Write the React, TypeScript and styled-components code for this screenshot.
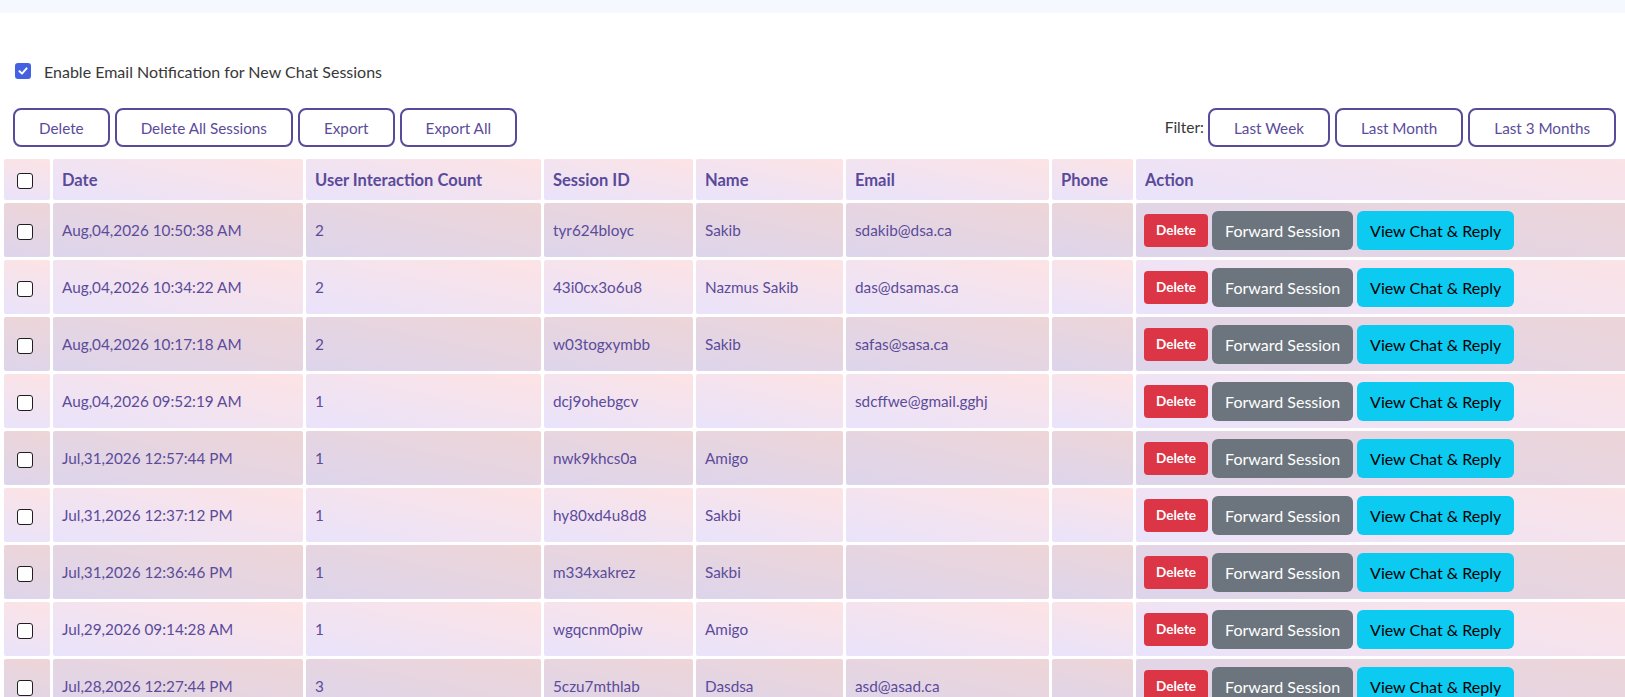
import { createGlobalStyle } from "styled-components"
import styled from "styled-components"

const GlobalStyle = createGlobalStyle`
    html, body {
        margin: 0;
        padding: 0;
        background: #fff;
        overflow: hidden;
        font-family: Lato, "Noto Sans", "Liberation Sans", sans-serif;
    }
`

const Page = styled.div`
    width: 1625px;
    min-height: 697px;
    overflow: hidden;
`

const TopBand = styled.div`
    height: 13px;
    background: #f5f8fe;
`

const Controls = styled.div`
    padding: 0 9px 0 13px;
`

const NotifyRow = styled.label`
    display: flex;
    align-items: center;
    gap: 13px;
    height: 22px;
    margin-top: 47px;
    padding-left: 2px;
    font-size: 16px;
    color: #383838;
`

const Toolbar = styled.div`
    display: flex;
    justify-content: space-between;
    align-items: center;
    margin-top: 26px;
`

const ButtonGroup = styled.div`
    display: flex;
    align-items: center;
    gap: 5px;
`

const FilterLabel = styled.span`
    font-size: 15.5px;
    color: #383838;
    margin-right: -1px;
    position: relative;
    top: -1px;
`

const OutlineButton = styled.button`
    height: 39px;
    padding: 0 24px;
    border: 2px solid #5a4a9a;
    border-radius: 8px;
    background: #fff;
    color: #5b4b9b;
    font-family: inherit;
    font-size: 15.25px;
    cursor: pointer;
`

const Box = styled.span<{ $checked?: boolean }>`
    display: inline-flex;
    align-items: center;
    justify-content: center;
    box-sizing: border-box;
    width: 16px;
    height: 16px;
    border-radius: 3px;
    border: ${p => (p.$checked ? "none" : "1.5px solid #1f1f1f")};
    background: ${p => (p.$checked ? "#4361e0" : "#fff")};
    vertical-align: middle;
`

const Table = styled.table`
    margin: 9px 0 0 1px;
    border-collapse: separate;
    border-spacing: 3px;
    table-layout: fixed;
    width: 1700px;
    font-size: 15.3px;
`

const HeadCell = styled.th<{ $w?: number }>`
    width: ${p => (p.$w ? `${p.$w}px` : "auto")};
    height: 41px;
    box-sizing: border-box;
    padding: 0 9px;
    text-align: left;
    font-size: 16.5px;
    font-weight: 700;
    color: #5a4a9a;
    border-radius: 2px;
    background: linear-gradient(12deg, #e9e3fb 0%, #fde3e4 100%);
`

const BodyCell = styled.td<{ $odd: boolean }>`
    height: 54px;
    box-sizing: border-box;
    padding: 0 9px;
    color: #5b4b9b;
    white-space: nowrap;
    border-radius: 2px;
    background: ${p =>
        p.$odd
            ? "linear-gradient(12deg, #ddd5ec 0%, #eed5d7 100%)"
            : "linear-gradient(12deg, #e9e3fb 0%, #fde3e4 100%)"};
`

const CheckCell = styled(BodyCell)`
    padding-left: 13px;
`

const HeadCheckCell = styled(HeadCell)`
    padding-left: 13px;
`

const ActionCell = styled(BodyCell)`
    padding-left: 8px;
`

const Actions = styled.div`
    display: flex;
    align-items: center;
    gap: 4px;
`

const SolidButton = styled.button<{ $bg: string; $fg: string }>`
    height: 39px;
    padding: 0 13px;
    border: none;
    border-radius: 6px;
    background: ${p => p.$bg};
    color: ${p => p.$fg};
    font-family: inherit;
    font-size: 16px;
    cursor: pointer;
`

const SmallDelete = styled.button`
    height: 33px;
    padding: 0 12px;
    border: none;
    border-radius: 4px;
    background: #dc3545;
    color: #fff;
    font-family: inherit;
    font-size: 13.5px;
    font-weight: 700;
    cursor: pointer;
`

function CheckBox({ checked }: { checked?: boolean }) {
    return (
        <Box $checked={checked} role="checkbox" aria-checked={!!checked}>
            {checked && (
                <svg width="12" height="12" viewBox="0 0 12 12">
                    <path d="M2.5 6.2 L5 8.6 L9.6 3.4" fill="none" stroke="#fff" strokeWidth="2" strokeLinecap="round" strokeLinejoin="round" />
                </svg>
            )}
        </Box>
    )
}

const sessions = [
    ["Aug,04,2026 10:50:38 AM", "2", "tyr624bloyc", "Sakib", "sdakib@dsa.ca"],
    ["Aug,04,2026 10:34:22 AM", "2", "43i0cx3o6u8", "Nazmus Sakib", "das@dsamas.ca"],
    ["Aug,04,2026 10:17:18 AM", "2", "w03togxymbb", "Sakib", "safas@sasa.ca"],
    ["Aug,04,2026 09:52:19 AM", "1", "dcj9ohebgcv", "", "sdcffwe@gmail.gghj"],
    ["Jul,31,2026 12:57:44 PM", "1", "nwk9khcs0a", "Amigo", ""],
    ["Jul,31,2026 12:37:12 PM", "1", "hy80xd4u8d8", "Sakbi", ""],
    ["Jul,31,2026 12:36:46 PM", "1", "m334xakrez", "Sakbi", ""],
    ["Jul,29,2026 09:14:28 AM", "1", "wgqcnm0piw", "Amigo", ""],
    ["Jul,28,2026 12:27:44 PM", "3", "5czu7mthlab", "Dasdsa", "asd@asad.ca"],
]

export default function App() {
    return (
        <Page>
            <GlobalStyle />
            <TopBand />
            <Controls>
                <NotifyRow>
                    <CheckBox checked />
                    Enable Email Notification for New Chat Sessions
                </NotifyRow>
                <Toolbar>
                    <ButtonGroup>
                        <OutlineButton>Delete</OutlineButton>
                        <OutlineButton>Delete All Sessions</OutlineButton>
                        <OutlineButton>Export</OutlineButton>
                        <OutlineButton>Export All</OutlineButton>
                    </ButtonGroup>
                    <ButtonGroup>
                        <FilterLabel>Filter:</FilterLabel>
                        <OutlineButton>Last Week</OutlineButton>
                        <OutlineButton>Last Month</OutlineButton>
                        <OutlineButton>Last 3 Months</OutlineButton>
                    </ButtonGroup>
                </Toolbar>
            </Controls>
            <Table>
                <thead>
                    <tr>
                        <HeadCheckCell $w={46}><CheckBox /></HeadCheckCell>
                        <HeadCell $w={250}>Date</HeadCell>
                        <HeadCell $w={235}>User Interaction Count</HeadCell>
                        <HeadCell $w={149}>Session ID</HeadCell>
                        <HeadCell $w={147}>Name</HeadCell>
                        <HeadCell $w={203}>Email</HeadCell>
                        <HeadCell $w={81}>Phone</HeadCell>
                        <HeadCell>Action</HeadCell>
                    </tr>
                </thead>
                <tbody>
                    {sessions.map((s, i) => {
                        const odd = i % 2 === 0
                        return (
                            <tr key={s[2]}>
                                <CheckCell $odd={odd}><CheckBox /></CheckCell>
                                <BodyCell $odd={odd}>{s[0]}</BodyCell>
                                <BodyCell $odd={odd}>{s[1]}</BodyCell>
                                <BodyCell $odd={odd}>{s[2]}</BodyCell>
                                <BodyCell $odd={odd}>{s[3]}</BodyCell>
                                <BodyCell $odd={odd}>{s[4]}</BodyCell>
                                <BodyCell $odd={odd}></BodyCell>
                                <ActionCell $odd={odd}>
                                    <Actions>
                                        <SmallDelete>Delete</SmallDelete>
                                        <SolidButton $bg="#6c757d" $fg="#fff">Forward Session</SolidButton>
                                        <SolidButton $bg="#0dcaf0" $fg="#000">View Chat &amp; Reply</SolidButton>
                                    </Actions>
                                </ActionCell>
                            </tr>
                        )
                    })}
                </tbody>
            </Table>
        </Page>
    )
}
